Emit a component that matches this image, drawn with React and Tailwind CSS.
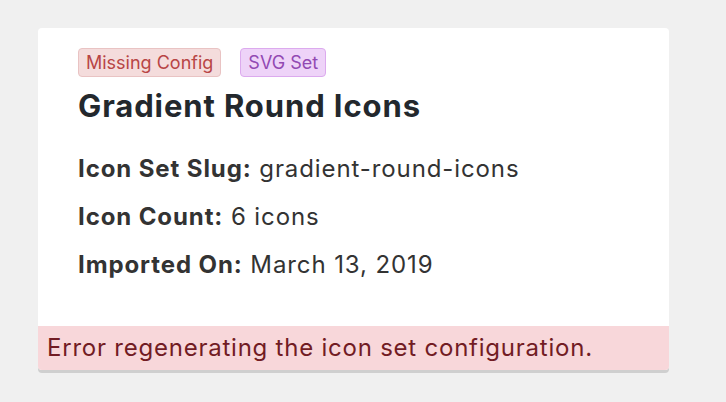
export default function App() {
  return (
    <div
      className="min-h-screen bg-[#f0f0f0] pt-[28px] pl-[38px]"
      style={{ fontFamily: "Inter, 'Noto Sans', sans-serif" }}
    >
      <div className="w-[631px] h-[342px] bg-white rounded-[4px] shadow-[0_3px_0_#cfcfcf] flex flex-col overflow-hidden">
        <div className="flex-1 pl-[40px] pt-[20px]">
          <div className="flex gap-[19px]">
            <span className="h-[29px] px-[7px] flex items-center rounded-[4px] border border-[#e9c3c3] bg-[#f4dcdc] text-[#b84545] text-[18px]">
              Missing Config
            </span>
            <span className="h-[29px] px-[7px] flex items-center rounded-[4px] border border-[#dcaaee] bg-[#eed3f8] text-[#9249b3] text-[18px]">
              SVG Set
            </span>
          </div>
          <h1 className="mt-[10px] text-[31px] font-bold text-[#23282d] leading-[38px] tracking-[0.9px]">
            Gradient Round Icons
          </h1>
          <div className="mt-[28px] flex flex-col gap-[16px] text-[24px] text-[#333] leading-[32px] tracking-[0.9px]">
            <p>
              <span className="font-bold">Icon Set Slug:</span> gradient-round-icons
            </p>
            <p>
              <span className="font-bold">Icon Count:</span> 6 icons
            </p>
            <p>
              <span className="font-bold">Imported On:</span> March 13, 2019
            </p>
          </div>
        </div>
        <div className="h-[44px] bg-[#f8d7da] text-[#721c24] text-[24px] tracking-[0.77px] pl-[9px] flex items-center">
          Error regenerating the icon set configuration.
        </div>
      </div>
    </div>
  );
}
